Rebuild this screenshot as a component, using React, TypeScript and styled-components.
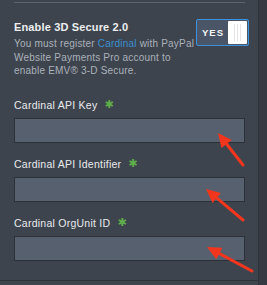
import React from "react";
import styled, { createGlobalStyle } from "styled-components";

const GlobalStyle = createGlobalStyle`
  html, body { margin: 0; padding: 0; background: #3e444d; }
  body { font-family: "Liberation Sans", Arial, sans-serif; -webkit-font-smoothing: antialiased; }
`;

const Page = styled.div`
  position: relative;
  display: flex;
  width: 267px;
  height: 285px;
  overflow: hidden;
  background: #3e444d;
`;

const Panel = styled.div`
  flex: 1;
  display: flex;
  flex-direction: column;
  padding: 2px 13px 0 14px;
  border-bottom: 1px solid #2e3339;
  height: 278px;
`;

const Strip = styled.div`
  width: 8px;
  background: #353a42;
  border-left: 1px solid #30353c;
`;

const Divider = styled.div`
  height: 1px;
  background: #5a6371;
`;

const ToggleRow = styled.div`
  display: flex;
  justify-content: space-between;
  align-items: flex-start;
  margin-top: 17px;
  margin-right: -4px;
`;

const TextCol = styled.div`
  display: flex;
  flex-direction: column;
`;

const Heading = styled.div`
  font-size: 11px;
  font-weight: 700;
  line-height: 14px;
  letter-spacing: 0.15px;
  color: #eceef0;
`;

const Desc = styled.div`
  margin-top: 3px;
  font-size: 10px;
  line-height: 13.5px;
  letter-spacing: 0.2px;
  color: #a9b1bb;
`;

const Link = styled.span`
  color: #3a8fd2;
`;

const Toggle = styled.div`
  display: flex;
  align-items: stretch;
  width: 49px;
  height: 23px;
  margin-top: -1px;
  border: 1.5px solid #3b93df;
  border-radius: 2px;
  background: #4a5667;
  padding: 1px;
`;

const ToggleLabel = styled.div`
  flex: 1;
  display: flex;
  align-items: center;
  justify-content: center;
  font-size: 9.5px;
  font-weight: 700;
  letter-spacing: 1px;
  color: #f2f4f6;
`;

const Knob = styled.div`
  width: 19px;
  background: #ffffff;
  border-radius: 1px;
  display: flex;
  justify-content: center;
  gap: 2px;
  padding: 3px 0;
  box-sizing: border-box;
`;

const Grip = styled.span`
  width: 1px;
  background: #e2e4e7;
`;

const Field = styled.div<{ $first?: boolean }>`
  display: flex;
  flex-direction: column;
  margin-top: ${(p) => (p.$first ? "20px" : "14px")};
`;

const Label = styled.div`
  display: flex;
  align-items: center;
  gap: 7px;
  font-size: 10.5px;
  line-height: 14px;
  letter-spacing: 0.25px;
  color: #e8eaed;
`;

const Req = styled.span`
  font-family: "DejaVu Sans", sans-serif;
  font-size: 11px;
  line-height: 14px;
  color: #5fae4b;
`;

const Input = styled.div`
  margin-top: 6px;
  height: 23px;
  background: #56606e;
  border: 1px solid #2c3138;
`;

const Overlay = styled.svg`
  position: absolute;
  left: 0;
  top: 0;
  pointer-events: none;
`;

type Pt = [number, number];
const arrows: { tip: Pt; tail: Pt }[] = [
  { tip: [218, 133], tail: [243, 165] },
  { tip: [206, 189], tail: [243, 220] },
  { tip: [207, 247], tail: [252, 271] },
];

function Arrow({ tip, tail }: { tip: Pt; tail: Pt }) {
  const dx = tip[0] - tail[0];
  const dy = tip[1] - tail[1];
  const len = Math.hypot(dx, dy);
  const ux = dx / len;
  const uy = dy / len;
  const hl = 14;
  const hw = 6.5;
  const bx = tip[0] - ux * hl;
  const by = tip[1] - uy * hl;
  const p1 = `${bx - uy * hw},${by + ux * hw}`;
  const p2 = `${bx + uy * hw},${by - ux * hw}`;
  return (
    <g>
      <line x1={tail[0]} y1={tail[1]} x2={bx + ux * 2} y2={by + uy * 2} stroke="#f2361d" strokeWidth={3} strokeLinecap="round" />
      <polygon points={`${tip[0]},${tip[1]} ${p1} ${p2}`} fill="#f2361d" />
    </g>
  );
}

export default function App() {
  return (
    <>
      <GlobalStyle />
      <Page>
        <Panel>
          <Divider />
          <ToggleRow>
            <TextCol>
              <Heading>Enable 3D Secure 2.0</Heading>
              <Desc>
                You must register <Link>Cardinal</Link> with PayPal
                <br />
                Website Payments Pro account to
                <br />
                enable EMV® 3-D Secure.
              </Desc>
            </TextCol>
            <Toggle>
              <ToggleLabel>YES</ToggleLabel>
              <Knob>
                <Grip />
                <Grip />
                <Grip />
              </Knob>
            </Toggle>
          </ToggleRow>
          <Field $first>
            <Label>
              Cardinal API Key <Req>✱</Req>
            </Label>
            <Input />
          </Field>
          <Field>
            <Label>
              Cardinal API Identifier <Req>✱</Req>
            </Label>
            <Input />
          </Field>
          <Field>
            <Label>
              Cardinal OrgUnit ID <Req>✱</Req>
            </Label>
            <Input />
          </Field>
        </Panel>
        <Strip />
        <Overlay width={267} height={285} viewBox="0 0 267 285">
          {arrows.map((a, i) => (
            <Arrow key={i} tip={a.tip} tail={a.tail} />
          ))}
        </Overlay>
      </Page>
    </>
  );
}
